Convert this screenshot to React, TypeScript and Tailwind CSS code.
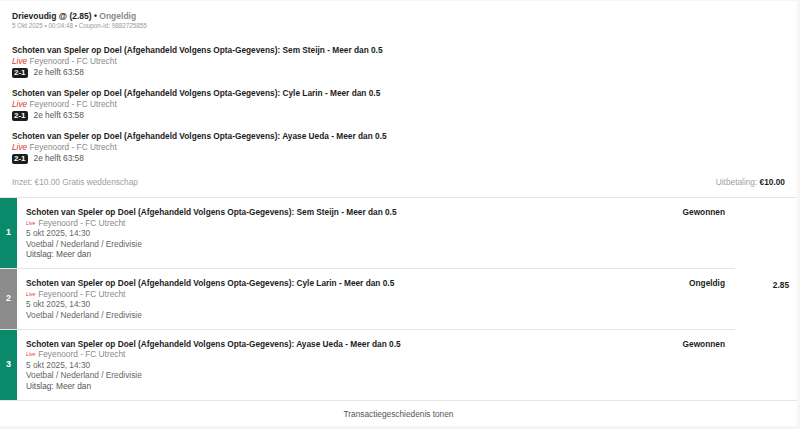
import React from 'react';

type Leg = {
  n: number;
  player: string;
  status: string;
  won: boolean;
  showResult: boolean;
};

const legs: Leg[] = [
  { n: 1, player: 'Sem Steijn', status: 'Gewonnen', won: true, showResult: true },
  { n: 2, player: 'Cyle Larin', status: 'Ongeldig', won: false, showResult: false },
  { n: 3, player: 'Ayase Ueda', status: 'Gewonnen', won: true, showResult: true },
];

const market = 'Schoten van Speler op Doel (Afgehandeld Volgens Opta-Gegevens)';

// Selection block in the coupon summary
function Selection({ player }: { player: string }) {
  return (
    <div className="flex flex-col">
      <div className="font-bold text-[#1c1c1c] leading-[11px]">
        {market}: {player} - Meer dan 0.5
      </div>
      <div className="leading-[11px] text-[#8a8a8a]">
        <span className="italic text-[#e0322b]">Live</span> Feyenoord - FC Utrecht
      </div>
      <div className="flex items-center gap-[6px] leading-[11px]">
        <span className="bg-[#1c1c1c] text-white font-bold rounded-[2px] px-[2px] h-[10px] leading-[10px] text-[8px]">
          2-1
        </span>
        <span className="text-[#555]">2e helft 63:58</span>
      </div>
    </div>
  );
}

// One row of the legs table
function LegRow({ leg, last }: { leg: Leg; last: boolean }) {
  return (
    <div className={`flex ${last ? '' : 'border-b border-[#e6e6e6]'}`}>
      <div
        className={`w-[17px] flex items-center justify-center text-white font-bold text-[9px] ${
          leg.won ? 'bg-[#0a8a6b]' : 'bg-[#8c8c8c]'
        }`}
      >
        {leg.n}
      </div>
      <div className="flex-1 pl-[9px] pt-[9px] pb-[8.5px] leading-[10.5px]">
        <div className="font-bold text-[#1c1c1c]">
          {market}: {leg.player} - Meer dan 0.5
        </div>
        <div className="text-[#8a8a8a]">
          <span className="italic text-[#e0322b] text-[5px] align-top mr-[3px]">Live</span>
          Feyenoord - FC Utrecht
        </div>
        <div className="text-[#666]">5 okt 2025, 14:30</div>
        <div className="text-[#666]">Voetbal / Nederland / Eredivisie</div>
        {leg.showResult && <div className="text-[#555]">Uitslag: Meer dan</div>}
      </div>
      <div className="w-[100px] pr-[10px] pt-[9px] text-right font-bold text-[#1c1c1c] leading-[10.5px]">
        {leg.status}
      </div>
    </div>
  );
}

export default function App() {
  return (
    <div
      className="bg-[#f7f6f3] h-[429px] pt-px pr-[3px] text-[8.3px]"
      style={{ fontFamily: '"Liberation Sans", Arial, sans-serif' }}
    >
      <div className="bg-white h-[425px] flex flex-col">
        {/* Coupon header */}
        <div className="px-3 pt-[10px]">
          <div className="leading-[11px] text-[#1c1c1c] text-[8.5px]">
            <span className="font-bold">Drievoudig @ (2.85)</span>
            <span className="font-bold"> • </span>
            <span className="font-bold text-[#8a8a8a]">Ongeldig</span>
          </div>
          <div className="text-[6.3px] leading-[8px] text-[#9a9a9a]">
            5 Okt 2025 • 00:04:48 • Coupon-Id: 9882725855
          </div>
        </div>

        <div className="px-3 pt-[15px] flex flex-col gap-[10px]">
          {legs.map((l) => (
            <Selection key={l.n} player={l.player} />
          ))}
        </div>

        <div className="px-3 pt-[13px] pb-[9px] flex justify-between leading-[11px]">
          <span className="text-[#a0a0a0]">Inzet: €10.00 Gratis weddenschap</span>
          <span className="text-[#a0a0a0]">
            Uitbetaling: <span className="font-bold text-[#1c1c1c]">€10.00</span>
          </span>
        </div>

        {/* Legs table */}
        <div className="flex border-t border-b border-[#e6e6e6]">
          <div className="w-[735px] flex flex-col">
            {legs.map((l, i) => (
              <LegRow key={l.n} leg={l} last={i === legs.length - 1} />
            ))}
          </div>
          <div className="flex-1 pt-[82px] pr-[8px] text-right font-bold text-[#1c1c1c] leading-[10.5px]">
            2.85
          </div>
        </div>

        <div className="flex-1 flex items-center justify-center text-[#555] pt-[2px]">
          Transactiegeschiedenis tonen
        </div>
      </div>
    </div>
  );
}
